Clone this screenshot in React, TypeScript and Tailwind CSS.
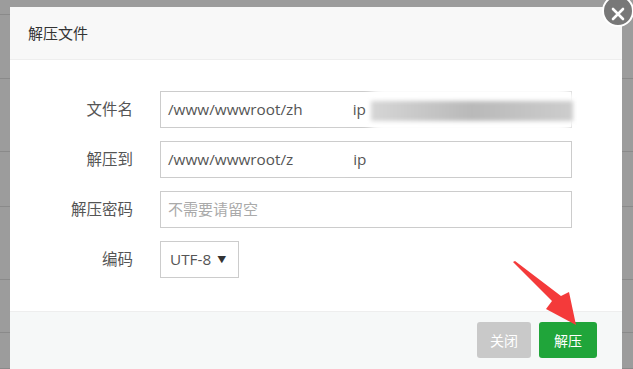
import React from 'react'

const cjk = { fontFamily: '"Open Sans", "Noto Sans CJK SC", sans-serif' }

function Row({ label, children }: { label: string; children: React.ReactNode }) {
  return (
    <div className="flex items-center h-[37px]">
      <div className="w-[123px] text-right text-[15.5px] text-[#555]">{label}</div>
      <div className="ml-[27px] h-full">{children}</div>
    </div>
  )
}

export default function App() {
  const bgRows = [15, 64, 73, 55, 73, 53, 36]

  return (
    <div className="relative w-[633px] h-[369px] overflow-hidden bg-[#9c9c9c]" style={cjk}>
      {/* page table behind the mask */}
      <div className="flex flex-col">
        {bgRows.map((h, i) => (
          <div key={i} className="border-b border-[#8a8a8a]" style={{ height: h }} />
        ))}
      </div>

      {/* dialog */}
      <div className="absolute left-[10px] top-[7px] w-[612px] h-[380px] bg-white flex flex-col">
        <div className="h-[53px] bg-[#f8f8f8] border-b border-[#eee] flex items-center pl-[18px] text-[15px] text-[#333]">
          解压文件
        </div>

        <div className="h-[251px] flex flex-col gap-[13px] pt-[31px]">
          <Row label="文件名">
            <div className="relative w-[412px] h-full border border-[#ccc] flex items-center pl-[7px] text-[15.3px] text-[#555]">
              <span>/www/wwwroot/zh</span>
              <div className="absolute left-[146px] top-[4px] w-[52px] h-[28px] rounded-full bg-white blur-[2px]" />
              <div className="absolute left-[202px] top-[-5px] w-[216px] h-[46px] rounded-[22px] bg-white blur-[3px]" />
              <div className="absolute left-[210px] top-[9px] w-[202px] h-[20px] bg-gradient-to-r from-[#d6d6d6] via-[#b9b9b9] to-[#cdcdcd] blur-[2px]" />
              <span className="relative ml-[50px]">ip</span>
            </div>
          </Row>
          <Row label="解压到">
            <div className="relative w-[412px] h-full border border-[#ccc] flex items-center pl-[7px] text-[15.3px] text-[#555]">
              <span>/www/wwwroot/z</span>
              <div className="absolute left-[138px] top-[4px] w-[58px] h-[28px] rounded-full bg-white blur-[2px]" />
              <span className="relative ml-[60px]">ip</span>
            </div>
          </Row>
          <Row label="解压密码">
            <div className="w-[412px] h-full border border-[#ccc] flex items-center pl-[7px] text-[15px] text-[#aaa]">
              不需要请留空
            </div>
          </Row>
          <Row label="编码">
            <div className="w-[79px] h-full border border-[#ccc] flex items-center pl-[9px] text-[15.3px] text-[#555] gap-[6px]">
              <span>UTF-8</span>
              <span className="text-[9px] text-[#333]">▼</span>
            </div>
          </Row>
        </div>

        <div className="flex-1 bg-[#f6f8f8] border-t border-[#eee] flex justify-end gap-[8px] pt-[10px] pr-[25px]">
          <button className="w-[54px] h-[36px] rounded-[3px] bg-[#c9c9c9] text-white text-[14px]">关闭</button>
          <button className="w-[58px] h-[36px] rounded-[3px] bg-[#20a53a] text-white text-[14px]">解压</button>
        </div>
      </div>

      {/* close circle */}
      <div className="absolute left-[602px] top-[-5px] w-[32px] h-[32px] rounded-full bg-[#787878] border-2 border-white flex items-center justify-center">
        <svg width="14" height="14" viewBox="0 0 14 14" className="mt-[5px]">
          <path d="M2 2 L12 12 M12 2 L2 12" stroke="white" strokeWidth="2.6" strokeLinecap="round" />
        </svg>
      </div>

      {/* red annotation arrow */}
      <svg className="absolute inset-0" width="633" height="369" viewBox="0 0 633 369">
        <polygon
          points="513,262 552,301 546,309 576,325 569,292 561,296 515,261"
          fill="#f43a3a"
        />
      </svg>
    </div>
  )
}
